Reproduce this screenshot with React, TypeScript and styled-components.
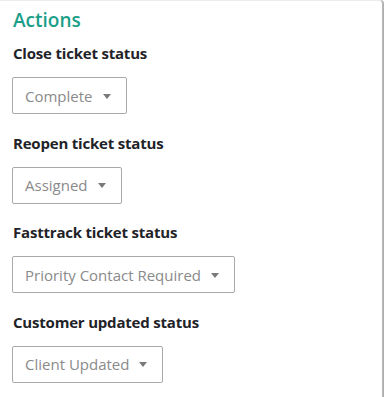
import React from 'react'
import styled, { createGlobalStyle } from 'styled-components'

const GlobalStyle = createGlobalStyle`
  html, body {
    margin: 0;
    padding: 0;
    background: #ffffff;
  }
  body {
    font-family: 'Open Sans', 'Noto Sans', sans-serif;
    color: #212529;
  }
`

const Card = styled.section`
  box-sizing: border-box;
  width: 383px;
  min-height: 397px;
  background: #fff;
  border-top: 1px solid #ececec;
  border-right: 1px solid #b8b8b8;
  border-top-right-radius: 4px;
  box-shadow: 1px 0 1px rgba(0, 0, 0, 0.35);
  padding: 6px 12px 12px 12px;
`

const Heading = styled.h2`
  margin: 0 0 10px 1px;
  font-size: 19px;
  font-weight: 600;
  line-height: 26px;
  color: #1a9e88;
`

const Group = styled.div`
  display: flex;
  flex-direction: column;
  align-items: flex-start;
  margin-bottom: 18.5px;
`

const Label = styled.label`
  font-size: 15px;
  font-weight: 700;
  line-height: 20px;
  color: #1f2328;
  margin: 0 0 14px 1px;
  letter-spacing: -0.2px;
`

const Select = styled.button`
  display: flex;
  align-items: center;
  gap: 10px;
  box-sizing: border-box;
  height: 37px;
  padding: 0 15px 0 12px;
  background: #fff;
  border: 1px solid #a9a9a9;
  border-radius: 2px;
  font-family: inherit;
  font-size: 15px;
  color: #8a8a8a;
  cursor: pointer;
`

const Caret = styled.span`
  width: 0;
  height: 0;
  border-left: 4.5px solid transparent;
  border-right: 4.5px solid transparent;
  border-top: 5px solid #7a7a7a;
  margin-top: 1px;
`

const fields = [
  { label: 'Close ticket status', value: 'Complete' },
  { label: 'Reopen ticket status', value: 'Assigned' },
  { label: 'Fasttrack ticket status', value: 'Priority Contact Required' },
  { label: 'Customer updated status', value: 'Client Updated' },
]

const App: React.FunctionComponent = () => {
  return (
    <>
      <GlobalStyle />
      <Card>
        <Heading>Actions</Heading>
        {fields.map(f => (
          <Group key={f.label}>
            <Label>{f.label}</Label>
            <Select type="button">
              {f.value}
              <Caret />
            </Select>
          </Group>
        ))}
      </Card>
    </>
  )
}

export default App
